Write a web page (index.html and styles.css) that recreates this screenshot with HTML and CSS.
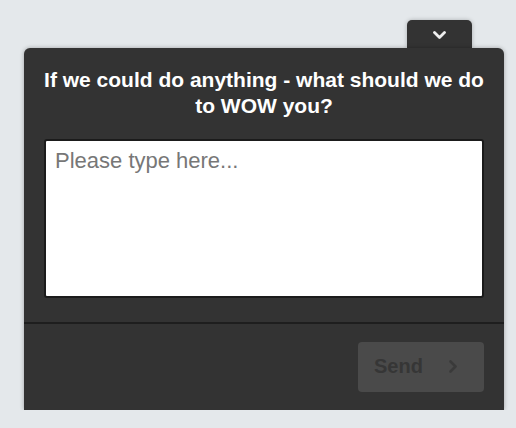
FILE: index.html
```html
<!DOCTYPE html>
<html>
<head>
<meta charset="utf-8">
<link rel="stylesheet" href="styles.css">
</head>
<body>
<div class="widget">
  <div class="tab">
    <svg width="13" height="9" viewBox="0 0 13 9"><path d="M1.5 1.5 L6.5 6.5 L11.5 1.5" fill="none" stroke="#eeeeee" stroke-width="2.8" stroke-linecap="round" stroke-linejoin="round"/></svg>
  </div>
  <div class="panel">
    <h1 class="title">If we could do anything - what should we do to WOW you?</h1>
    <textarea class="field" placeholder="Please type here..."></textarea>
    <div class="footer">
      <button class="send"><span>Send</span>
        <svg width="9" height="13" viewBox="0 0 9 13"><path d="M1.5 1.5 L6.5 6.5 L1.5 11.5" fill="none" stroke="#3a3a3a" stroke-width="2.6" stroke-linecap="round" stroke-linejoin="round"/></svg>
      </button>
    </div>
  </div>
</div>
</body>
</html>
```
FILE: styles.css
```css
html, body {
  margin: 0;
  padding: 0;
  background: #e4e8eb;
  font-family: "Liberation Sans", Arial, Helvetica, sans-serif;
}
.widget {
  width: 480px;
  padding: 20px 0 0 24px;
  display: flex;
  flex-direction: column;
}
.tab {
  align-self: flex-end;
  margin-right: 32px;
  width: 65px;
  height: 28px;
  background: #333333;
  border-radius: 5px 5px 0 0;
  box-shadow: 0 0 4px rgba(0,0,0,0.25);
  display: flex;
  justify-content: center;
  align-items: flex-start;
  box-sizing: border-box;
  position: relative;
  z-index: 1;
}
.tab svg {
  margin-top: 11px;
}
.panel {
  height: 362px;
  background: #333333;
  border-radius: 6px 6px 0 0;
  box-shadow: 0 0 4px rgba(0,0,0,0.3);
  display: flex;
  flex-direction: column;
  position: relative;
  z-index: 2;
}
.title {
  margin: 0;
  padding: 19px 17px 0;
  color: #ffffff;
  font-size: 21px;
  line-height: 26px;
  font-weight: bold;
  text-align: center;
}
.field {
  margin: 20px 20px 0;
  width: 440px;
  height: 159px;
  box-sizing: border-box;
  border: 2px solid #1b1b1b;
  border-radius: 3px;
  background: #ffffff;
  padding: 7px 9px;
  font-family: "Liberation Sans", Arial, Helvetica, sans-serif;
  font-size: 22px;
  resize: none;
  outline: none;
  display: block;
}
.field::placeholder {
  color: #777777;
}
.footer {
  margin-top: 24px;
  border-top: 2px solid #1e1e1e;
  padding: 18px 20px 18px;
  display: flex;
  justify-content: flex-end;
}
.send {
  width: 126px;
  height: 50px;
  background: #4a4a4a;
  border: none;
  border-radius: 4px;
  display: flex;
  align-items: center;
  padding: 0 0 2px 16px;
  font-family: "Liberation Sans", Arial, Helvetica, sans-serif;
  font-size: 20px;
  font-weight: bold;
  color: #363636;
}
.send svg {
  margin-left: 26px;
}
```
